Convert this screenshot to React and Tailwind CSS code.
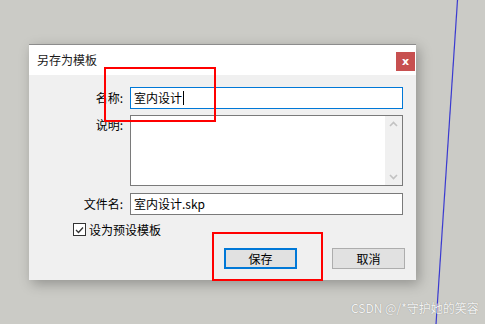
import React from "react";

const font = { fontFamily: '"Noto Sans CJK SC", "Noto Sans", sans-serif' };

export default function App() {
  return (
    <div
      className="relative w-[485px] h-[324px] overflow-hidden bg-[#cbcbc6] pt-[44px] pl-[29px] text-[12px] leading-[16px] text-black"
      style={font}
    >
      {/* dialog */}
      <div className="w-[387px] h-[236px] flex flex-col border-t border-[#8c8c8c] shadow-[3px_4px_12px_rgba(0,0,0,0.28)]">
        <div className="h-[30px] bg-white flex items-start">
          <span className="ml-[8px] mt-[7px] text-[#1a1a1a]">另存为模板</span>
          <div className="ml-auto mr-[1px] mt-[7px] w-[19px] h-[19px] bg-[#c75050] flex items-center justify-center">
            <span className="text-white font-bold text-[11px] leading-none" style={{ fontFamily: '"DejaVu Sans", sans-serif' }}>x</span>
          </div>
        </div>
        <div className="flex-1 bg-[#f0f0f0] flex flex-col pt-[12px]">
          {/* name row */}
          <div className="flex items-center h-[22px]">
            <div className="w-[94px] text-right">名称:</div>
            <div className="ml-[7px] w-[273px] h-[22px] bg-white border border-[#0078d7] flex items-center pl-[3px]">
              <span>室内设计</span>
              <span className="w-[1px] h-[14px] bg-black ml-[1px]" />
            </div>
          </div>
          {/* description */}
          <div className="flex mt-[6px] h-[71px]">
            <div className="w-[94px] text-right pt-[2px]">说明:</div>
            <div className="ml-[7px] w-[273px] h-[71px] bg-white border border-[#7a7a7a] flex justify-end">
              <div className="w-[17px] h-full bg-[#f0f0f0] flex flex-col items-center justify-between py-[5px]">
                <svg width="9" height="6" viewBox="0 0 9 6">
                  <path d="M1 5 L4.5 1.5 L8 5" stroke="#c2c2c2" strokeWidth="1.6" fill="none" />
                </svg>
                <svg width="9" height="6" viewBox="0 0 9 6">
                  <path d="M1 1 L4.5 4.5 L8 1" stroke="#c2c2c2" strokeWidth="1.6" fill="none" />
                </svg>
              </div>
            </div>
          </div>
          {/* filename */}
          <div className="flex items-center mt-[7px] h-[22px]">
            <div className="w-[94px] text-right">文件名:</div>
            <div className="ml-[7px] w-[273px] h-[22px] bg-white border border-[#7a7a7a] flex items-center pl-[3px]">
              室内设计.skp
            </div>
          </div>
          {/* checkbox */}
          <div className="flex items-center mt-[8px] h-[13px] pl-[44px]">
            <div className="w-[13px] h-[13px] border border-[#333333] bg-white flex items-center justify-center">
              <svg width="9" height="8" viewBox="0 0 9 8">
                <path d="M1 4 L3.5 6.5 L8 1.5" stroke="#333333" strokeWidth="1.3" fill="none" />
              </svg>
            </div>
            <span className="ml-[3px]">设为预设模板</span>
          </div>
          {/* buttons */}
          <div className="flex mt-[12px] pl-[195px]">
            <div className="w-[73px] h-[21px] bg-[#e1e1e1] border-2 border-[#0078d7] flex items-center justify-center">
              保存
            </div>
            <div className="ml-[35px] w-[73px] h-[21px] bg-[#e1e1e1] border border-[#adadad] flex items-center justify-center">
              取消
            </div>
          </div>
        </div>
      </div>

      {/* blue guide line */}
      <svg className="absolute left-0 top-0 pointer-events-none" width="485" height="324">
        <line x1="457.5" y1="0" x2="436" y2="324" stroke="#3a3ad0" strokeWidth="1.2" />
      </svg>

      {/* red annotation boxes */}
      <div className="absolute left-[104px] top-[67px] w-[112px] h-[55px] border-2 border-[#ff0000]" />
      <div className="absolute left-[212px] top-[232px] w-[111px] h-[49px] border-2 border-[#ff0000]" />

      {/* watermark */}
      <div
        className="absolute left-[351px] top-[300px] text-[12px] leading-[16px] text-[#f4f4f4] [text-shadow:0_0_1px_rgba(0,0,0,0.35)]"
      >
        CSDN @/*守护她的笑容
      </div>
    </div>
  );
}
